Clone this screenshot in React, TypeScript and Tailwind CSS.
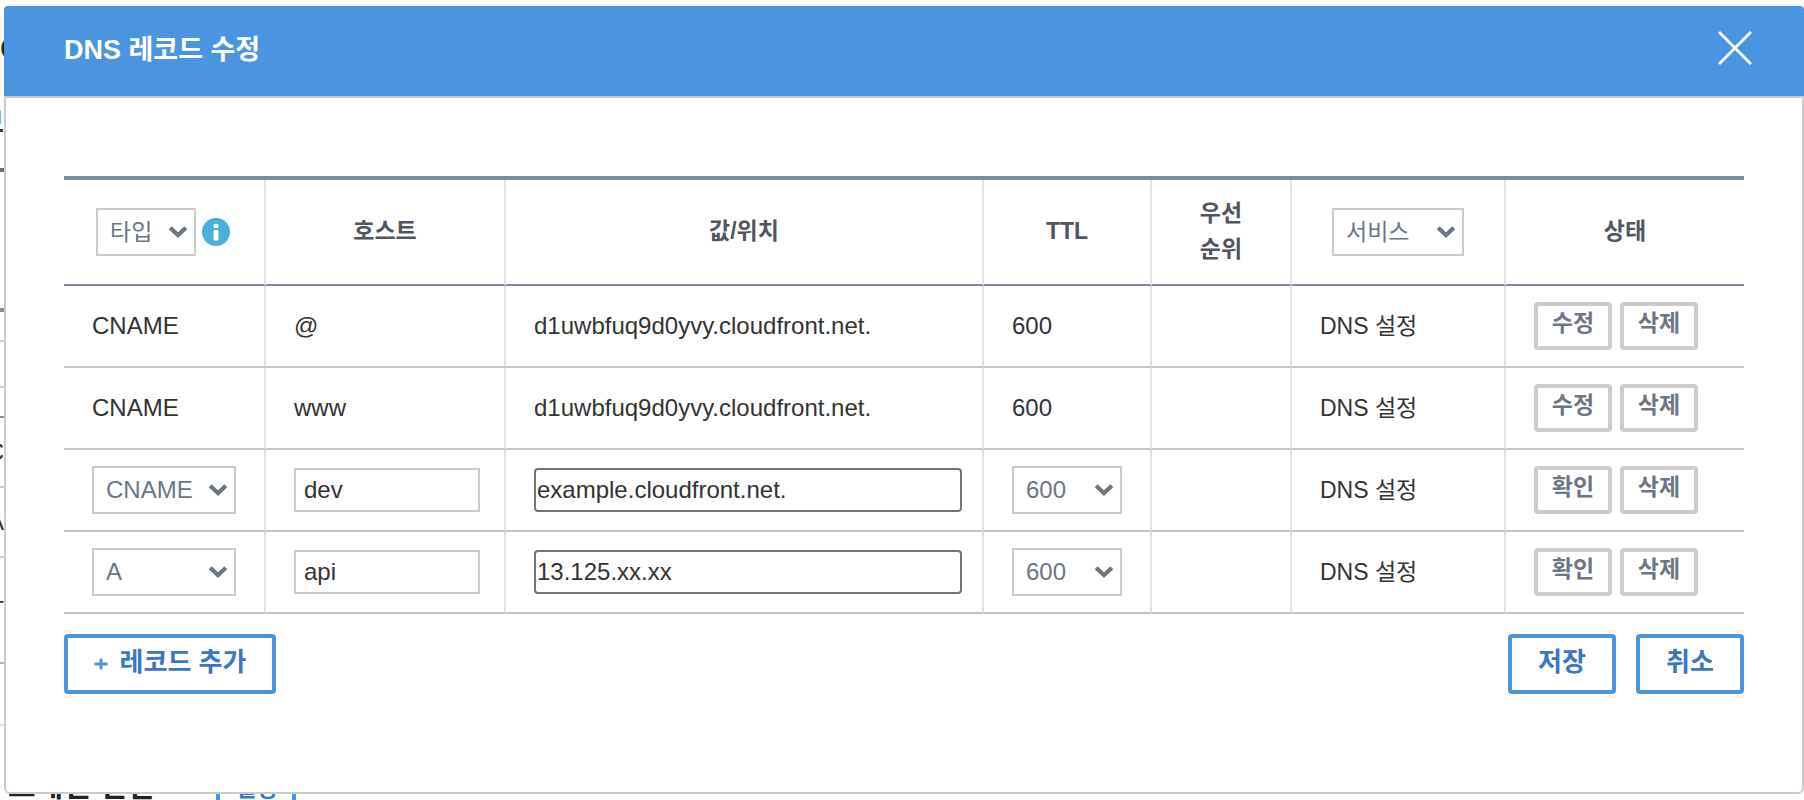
import { useState } from 'react'

type DnsRecord = {
  id: number
  type: string
  host: string
  value: string
  ttl: string
  editing: boolean
}

const initialRecords: DnsRecord[] = [
  { id: 1, type: 'CNAME', host: '@', value: 'd1uwbfuq9d0yvy.cloudfront.net.', ttl: '600', editing: false },
  { id: 2, type: 'CNAME', host: 'www', value: 'd1uwbfuq9d0yvy.cloudfront.net.', ttl: '600', editing: false },
  { id: 3, type: 'CNAME', host: 'dev', value: 'example.cloudfront.net.', ttl: '600', editing: true },
  { id: 4, type: 'A', host: 'api', value: '13.125.xx.xx', ttl: '600', editing: true },
]

type SelectBoxProps = {
  label: string
  options: string[]
  defaultValue: string
  className: string
}

function SelectBox({ label, options, defaultValue, className }: SelectBoxProps) {
  return (
    <div className={`relative ${className}`}>
      <select
        aria-label={label}
        defaultValue={defaultValue}
        className="block h-12 w-full appearance-none border-2 border-[#cccccc] bg-white pl-3 font-normal text-[#6c7683]"
      >
        {options.map((option) => (
          <option key={option} value={option}>
            {option}
          </option>
        ))}
      </select>
      <svg
        viewBox="0 0 20 14"
        className="pointer-events-none absolute top-[17px] right-2 h-3.5 w-5"
        fill="none"
        stroke="#6c7683"
        strokeWidth="4.2"
        aria-hidden="true"
      >
        <path d="M2.2 2.8 L10 10.2 L17.8 2.8" />
      </svg>
    </div>
  )
}

function SmallButton({ children, onClick }: { children: string; onClick?: () => void }) {
  return (
    <button
      type="button"
      onClick={onClick}
      className="h-12 w-[78px] rounded border-4 border-[#cccccc] bg-white pb-1.5 text-[23px] leading-8 font-bold text-[#6c7683]"
    >
      {children}
    </button>
  )
}

function RecordRow({ record, onConfirm, onDelete }: { record: DnsRecord; onConfirm: () => void; onDelete: () => void }) {
  const cell = 'h-[82px] border-r-2 border-r-[#e2e2e2] border-b-2 border-b-[#c4c4c4] pl-7'

  return (
    <tr>
      <td className={cell}>
        {record.editing ? (
          <SelectBox label="타입" options={['A', 'CNAME', 'MX', 'TXT']} defaultValue={record.type} className="w-36" />
        ) : (
          record.type
        )}
      </td>
      <td className={`${cell} pr-6`}>
        {record.editing ? (
          <input
            aria-label="호스트"
            defaultValue={record.host}
            className="block h-11 w-full border-2 border-[#cccccc] bg-white pl-2"
          />
        ) : (
          record.host
        )}
      </td>
      <td className={`${cell} pr-5`}>
        {record.editing ? (
          <input
            aria-label="값/위치"
            defaultValue={record.value}
            className="block h-11 w-full rounded border-2 border-[#767676] bg-white pl-px"
          />
        ) : (
          record.value
        )}
      </td>
      <td className={cell}>
        {record.editing ? (
          <SelectBox label="TTL" options={['600', '1800', '3600']} defaultValue={record.ttl} className="w-[110px]" />
        ) : (
          record.ttl
        )}
      </td>
      <td className={cell}></td>
      <td className={`${cell} text-[23px]`}>DNS 설정</td>
      <td className="border-b-2 border-b-[#c4c4c4] pl-7">
        <div className="flex gap-2">
          <SmallButton onClick={onConfirm}>{record.editing ? '확인' : '수정'}</SmallButton>
          <SmallButton onClick={onDelete}>삭제</SmallButton>
        </div>
      </td>
    </tr>
  )
}

// Page underneath the dialog, only its left edge and last line stay visible
function PageBehind() {
  return (
    <div className="flex h-screen flex-col overflow-hidden text-2xl text-[#333333]" aria-hidden="true">
      <div className="w-1 shrink-0 overflow-hidden">
        <div className="h-[172px] border-b-4 border-[#6e6e6e] pt-7">
          <div className="text-[34px] leading-10 font-bold text-[#222222]">C</div>
          <div className="flex justify-end pt-9 text-[28px] leading-10 font-bold">보</div>
        </div>
        <div className="h-[140px] border-b-4 border-[#7d8fa3]" />
        <div className="h-[30px] border-b-2 border-[#cccccc]" />
        <div className="h-[46px] border-b-2 border-[#cccccc]" />
        <div className="h-[30px] border-b-2 border-[#8a8a8a]" />
        <div className="flex h-[70px] items-center justify-end border-b-2 border-[#cccccc]">C</div>
        <div className="flex h-[70px] items-center justify-end border-b-2 border-[#cccccc]">A</div>
        <div className="flex h-[106px] items-center justify-end border-b-2 border-[#b4b4b4]">T</div>
        <div className="h-[62px] border-b-2 border-[#e2e2e2]" />
      </div>
      <div className="flex shrink-0 items-start gap-[62px] pt-10 pl-2">
        <span className="text-[30px] leading-10 font-bold text-[#222222]">도메인 연결</span>
        <span className="h-12 w-20 rounded border-4 border-[#4b95e0] text-center text-[23px] leading-9 font-bold text-[#3a76c2]">
          설정
        </span>
      </div>
    </div>
  )
}

export default function App() {
  const [records, setRecords] = useState(initialRecords)

  const toggleEdit = (id: number) => {
    setRecords(records.map((r) => (r.id === id ? { ...r, editing: !r.editing } : r)))
  }

  const removeRecord = (id: number) => {
    setRecords(records.filter((r) => r.id !== id))
  }

  const addRecord = () => {
    const id = Math.max(0, ...records.map((r) => r.id)) + 1
    setRecords([...records, { id, type: 'A', host: '', value: '', ttl: '600', editing: true }])
  }

  const head = 'h-[106px] border-r-2 border-b-2 border-r-[#e2e2e2] border-b-[#7d8c9f] pb-0.5'
  const action =
    'h-[60px] rounded border-4 border-[#4b95e0] bg-white pb-1 text-[26px] leading-10 font-bold text-[#3a76c2]'

  return (
    <main className="relative bg-white font-['Liberation_Sans','Noto_Sans_CJK_KR',sans-serif]">
      <PageBehind />

      <section
        role="dialog"
        aria-labelledby="dialog-title"
        className="absolute top-1.5 right-0 left-1 text-2xl text-[#333333]"
      >
        <header className="flex h-[90px] items-center justify-between rounded-t bg-[#4b95e0] pr-[52px] pl-[60px]">
          <h2 id="dialog-title" className="pb-0.5 text-[27px] leading-10 font-bold text-white">
            DNS 레코드 수정
          </h2>
          <button type="button" aria-label="닫기" className="pb-1.5">
            <svg viewBox="0 0 34 34" className="size-[34px]" fill="none" stroke="#f2f8fd" strokeWidth="3">
              <path d="M1 1 L33 33 M33 1 L1 33" />
            </svg>
          </button>
        </header>

        <div className="rounded-b-md border-2 border-[#cccccc] bg-white px-[58px] pt-[78px] pb-[98px]">
          <table className="w-full table-fixed border-separate border-spacing-0 border-t-4 border-[#7d8c9f]">
            <colgroup>
              <col className="w-[202px]" />
              <col className="w-[240px]" />
              <col />
              <col className="w-[168px]" />
              <col className="w-[140px]" />
              <col className="w-[214px]" />
              <col className="w-[238px]" />
            </colgroup>
            <thead className="text-[23px] leading-9 text-[#50565e]">
              <tr>
                <th className={head}>
                  <div className="flex items-center justify-center gap-1.5 pt-0.5 pr-0.5">
                    <SelectBox label="타입" options={['타입', 'A', 'CNAME']} defaultValue="타입" className="w-[100px]" />
                    <svg viewBox="0 0 28 28" className="size-7" role="img" aria-label="도움말">
                      <circle cx="14" cy="14" r="14" fill="#4dafdc" />
                      <rect x="11.6" y="6" width="4.8" height="4" rx="1" fill="#ffffff" />
                      <rect x="11.6" y="12" width="4.8" height="10.4" rx="1" fill="#ffffff" />
                    </svg>
                  </div>
                </th>
                <th className={head}>호스트</th>
                <th className={head}>값/위치</th>
                <th className={head}>TTL</th>
                <th className={head}>
                  우선
                  <br />
                  순위
                </th>
                <th className={head}>
                  <div className="flex justify-center pt-0.5">
                    <SelectBox label="서비스" options={['서비스', 'DNS 설정']} defaultValue="서비스" className="w-[132px]" />
                  </div>
                </th>
                <th className="border-b-2 border-b-[#7d8c9f] pb-0.5">상태</th>
              </tr>
            </thead>
            <tbody>
              {records.map((record) => (
                <RecordRow
                  key={record.id}
                  record={record}
                  onConfirm={() => toggleEdit(record.id)}
                  onDelete={() => removeRecord(record.id)}
                />
              ))}
            </tbody>
          </table>

          <div className="flex justify-between pt-5">
            <button type="button" onClick={addRecord} className={`${action} flex w-[212px] items-center justify-center gap-3`}>
              <svg viewBox="0 0 14 14" className="mt-1 size-3.5" fill="none" stroke="#5b8fd0" strokeWidth="3" aria-hidden="true">
                <path d="M7 1.5 V12.5 M0.5 7 H13.5" />
              </svg>
              레코드 추가
            </button>
            <div className="flex gap-5">
              <button type="button" className={`${action} w-[108px]`}>
                저장
              </button>
              <button type="button" className={`${action} w-[108px]`}>
                취소
              </button>
            </div>
          </div>
        </div>
      </section>
    </main>
  )
}
